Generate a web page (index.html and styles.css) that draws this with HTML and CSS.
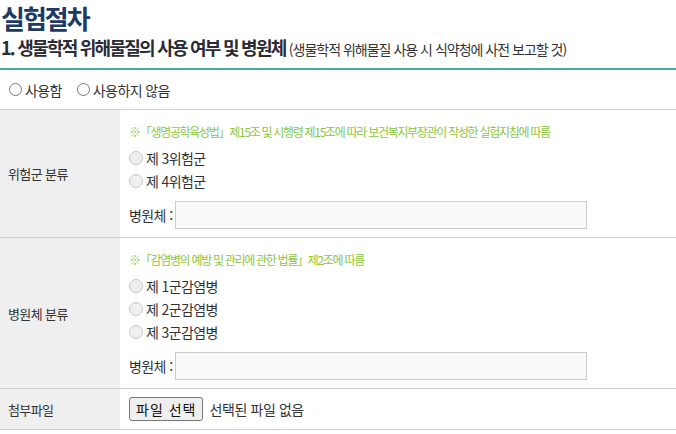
FILE: index.html
```html
<!DOCTYPE html>
<html lang="ko">
<head>
<meta charset="utf-8">
<title>실험절차</title>
<link rel="stylesheet" href="styles.css">
</head>
<body>
<h1 class="title">실험절차</h1>
<h2 class="subtitle">1. 생물학적 위해물질의 사용 여부 및 병원체 <span class="subtitle-note">(생물학적 위해물질 사용 시 식약청에 사전 보고할 것)</span></h2>
<div class="use-row">
  <label class="opt"><input type="radio" name="use" class="radio"><span>사용함</span></label>
  <label class="opt"><input type="radio" name="use" class="radio"><span>사용하지 않음</span></label>
</div>
<table class="form-table">
  <tr>
    <th>위험군 분류</th>
    <td>
      <div class="cell">
        <p class="note">※「생명공학육성법」제15조 및 시행령 제15조에 따라 보건복지부장관이 작성한 실험지침에 따름</p>
        <label class="choice"><input type="radio" name="risk" class="radio soft" disabled><span>제 3위험군</span></label>
        <label class="choice"><input type="radio" name="risk" class="radio soft" disabled><span>제 4위험군</span></label>
        <div class="field"><span class="field-label">병원체 :</span><input type="text" class="text-input"></div>
      </div>
    </td>
  </tr>
  <tr>
    <th>병원체 분류</th>
    <td>
      <div class="cell">
        <p class="note">※「감염병의 예방 및 관리에 관한 법률」제2조에 따름</p>
        <label class="choice"><input type="radio" name="path" class="radio soft" disabled><span>제 1군감염병</span></label>
        <label class="choice"><input type="radio" name="path" class="radio soft" disabled><span>제 2군감염병</span></label>
        <label class="choice"><input type="radio" name="path" class="radio soft" disabled><span>제 3군감염병</span></label>
        <div class="field"><span class="field-label">병원체 :</span><input type="text" class="text-input"></div>
      </div>
    </td>
  </tr>
  <tr>
    <th>첨부파일</th>
    <td class="file-cell">
      <div class="file-row"><button type="button" class="file-btn">파일 선택</button><span class="file-status">선택된 파일 없음</span></div>
    </td>
  </tr>
</table>
</body>
</html>
```

FILE: styles.css
```css
* { box-sizing: border-box; }
html, body { margin: 0; padding: 0; background: #fff; }
body {
  font-family: "Noto Sans CJK KR", "Noto Sans", sans-serif;
  color: #333;
}
.title {
  margin: 0;
  padding: 2px 0 0 1px;
  font-size: 26px;
  line-height: 32px;
  font-weight: 700;
  letter-spacing: -2px;
  color: #1c3a64;
}
.subtitle {
  margin: 0;
  padding: 0 0 6px 1px;
  font-size: 18px;
  line-height: 26px;
  font-weight: 700;
  letter-spacing: -1.75px;
  color: #2a2a35;
  border-bottom: 2px solid #4aa7a8;
}
.subtitle-note {
  font-size: 14px;
  font-weight: 400;
  letter-spacing: -1px;
  color: #333;
}
.use-row {
  display: flex;
  align-items: center;
  gap: 10px;
  height: 39px;
  padding: 0 0 0 4px;
}
.opt, .choice {
  display: flex;
  align-items: center;
  font-size: 14px;
  letter-spacing: -0.6px;
}
.radio {
  appearance: none;
  -webkit-appearance: none;
  width: 13px;
  height: 13px;
  margin: 0 3px 0 5px;
  border: 1px solid #767676;
  border-radius: 50%;
  background: #fff;
  flex: none;
}
.radio.soft {
  width: 14px;
  height: 14px;
  margin: 0 3px 0 0;
  border-color: #c9c9c9;
  background: #efefef;
}
.form-table {
  width: 100%;
  border-collapse: collapse;
  border-top: 1px solid #cfcfcf;
}
.form-table tr { border-bottom: 1px solid #cfcfcf; }
.form-table th {
  width: 120px;
  padding: 0 0 0 8px;
  background: #efefef;
  text-align: left;
  vertical-align: middle;
  font-size: 13px;
  font-weight: 400;
  letter-spacing: -0.6px;
  color: #333;
}
.form-table td {
  padding: 13px 0 8px 9px;
  vertical-align: top;
}
.cell { display: flex; flex-direction: column; }
.note {
  margin: 0 0 5px;
  font-size: 12px;
  line-height: 18px;
  letter-spacing: -1.3px;
  color: #8cc63e;
}
.choice { height: 23px; }
.field {
  display: flex;
  align-items: center;
  margin-top: 9px;
}
.field-label {
  font-size: 14px;
  letter-spacing: -0.6px;
  margin-right: 3px;
}
.text-input {
  width: 412px;
  height: 28px;
  border: 1px solid #cccccc;
  background: #f9f9f9;
  font-size: 14px;
}
.form-table td.file-cell { padding: 8px 0 8px 9px; }
.file-row { display: flex; align-items: center; }
.file-btn {
  height: 24px;
  padding: 0 6px;
  border: 1px solid #767676;
  border-radius: 3px;
  background: #efefef;
  font-family: "Noto Sans CJK KR", sans-serif;
  font-size: 14px;
  letter-spacing: 1px;
  color: #111;
}
.file-status {
  margin-left: 6px;
  font-size: 14px;
  letter-spacing: -0.4px;
  color: #333;
}
```
